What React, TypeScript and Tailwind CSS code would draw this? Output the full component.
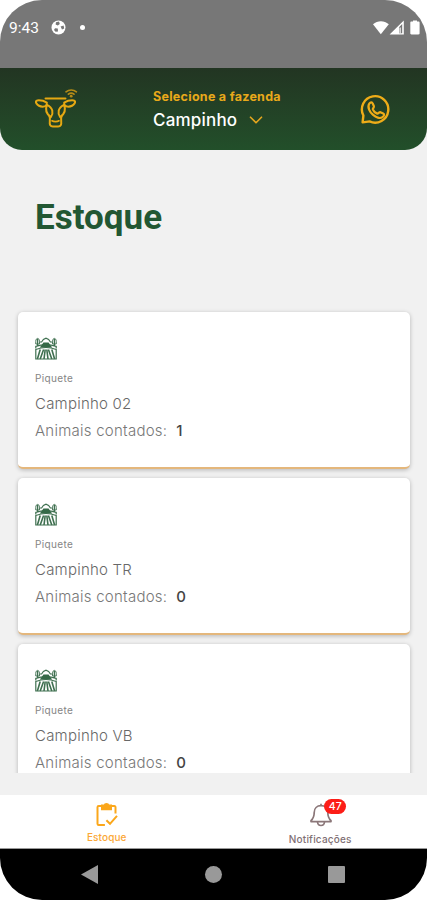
import { ChevronDown } from 'lucide-react';

type Paddock = {
  name: string;
  animals: number;
};

const paddocks: Paddock[] = [
  { name: 'Campinho 02', animals: 1 },
  { name: 'Campinho TR', animals: 0 },
  { name: 'Campinho VB', animals: 0 },
];

function BallIcon() {
  return (
    <svg width="15" height="15" viewBox="0 0 15 15">
      <circle cx="7.5" cy="7.5" r="7" fill="#fff" />
      <path d="M5 2.2 8 1.6 8.8 4 6.8 5.4 4.6 4.4ZM9.6 6.6 12.6 5.6 13.2 8.4 11 9.4ZM4 8.2 6.8 8.6 7 11.4 4.6 11.8 3 10Z" fill="#777" />
    </svg>
  );
}

function StatusIcons() {
  return (
    <svg width="50" height="16" viewBox="0 0 50 16" fill="#fff">
      <path d="M1 4.3C5.4.3 12-.1 16.8 4.3L8.8 14.3Z" />
      <path d="M17.6 14.4 31.8.4v14ZM27 7.2v6h3.2V4Z" fillRule="evenodd" />
      <path d="M27.5 7.4h1.2v5.8h-1.2z" />
      <path d="M41 1.5V.4h4v1.1h1.4c.8 0 1.2.5 1.2 1.2v10.5c0 .8-.4 1.2-1.2 1.2h-6.9c-.8 0-1.2-.4-1.2-1.2V2.7c0-.7.4-1.2 1.2-1.2Z" />
    </svg>
  );
}

function CowIcon() {
  return (
    <svg width="44" height="42" viewBox="0 0 44 42" fill="none" stroke="#e5a812" strokeWidth="2" strokeLinecap="round" strokeLinejoin="round">
      <path d="M11.5 10.4h20" />
      <path d="M12.8 14.6C10 12.8 6 12.2 3.4 12.4c-1.6.2-1.9 1.6-1 3C4 18 6.6 18.8 9.6 18.6c2.2-.2 3.4-1.8 3.2-4Z" />
      <path d="M30.2 14.6c2.8-1.8 6.8-2.4 9.4-2.2 1.6.2 1.9 1.6 1 3-1.6 2.6-4.2 3.4-7.2 3.2-2.2-.2-3.4-1.8-3.2-4Z" />
      <path d="M13 16.8c-2 4.4-1 8.6 3.8 12.4C19.8 25 19 19.6 13 16.8Z" />
      <path d="M30 16.8c2 4.4 1 8.6-3.8 12.4C23.2 25 24 19.6 30 16.8Z" />
      <path d="M15.2 27.6c1 2 1 3.6.6 6-.4 3.2.6 5 3 5h5.4c2.4 0 3.4-1.8 3-5-.4-2.4-.4-4 .6-6" />
      <path d="M18 32.8c1.6 1.2 5.4 1.2 7 0" strokeWidth="1.7" />
      <path d="M32 3.8c3-2.4 7.4-2.4 10.4 0M34.4 6.2c1.6-1.3 4-1.3 5.6 0" strokeWidth="1.7" stroke="#b58b17" />
      <circle cx="37.2" cy="8.2" r="1.4" fill="#b58b17" stroke="none" />
    </svg>
  );
}

function WhatsappIcon() {
  return (
    <svg width="32" height="32" viewBox="0 0 32 32" fill="none" stroke="#eeac18" strokeLinejoin="round">
      <path d="M2.6 28.4 3.4 21.5A13.2 13.2 0 1 1 9.6 27.4Z" strokeWidth="2.4" />
      <path d="M9.2 9.8c1.3-1.6 2.8-1.9 3.6-.2l1.1 2.6c.5 1.2-1.4 2.2-1.1 3.2.8 2.1 2.4 3.5 4.4 4.2 1 .4 2.1-1.9 3.2-1.4l2.8 1.3c1.7.9.8 2.5-.8 3.7-2.4 1.7-6.5.1-9.3-2.3-3.4-2.9-6-7.6-3.9-11.1Z" strokeWidth="2.2" />
    </svg>
  );
}

function FieldIcon() {
  return (
    <svg width="22" height="23" viewBox="0 0 22 23" fill="none" stroke="#3f7050" strokeWidth="1.2">
      <path d="M.8 22V12.5Q11 8.5 21.2 12.5V22Z" />
      <path d="M8.6 12.5 5.2 22M10.2 12.5 9 22M11.8 12.5 13 22M13.4 12.5 16.8 22M5.2 12.5 2.4 22M16.8 12.5 19.6 22" strokeWidth="1.6" />
      <path d="M.8 11.5V9.4Q11 6 21.2 9.4v2.1M2.6 9V2M19.4 9V2M4.4 5h2.2L8.4 2.5 11 1.2l2.6 1.3L15.4 5h2.2" />
      <path d="M4.8 10.4 7.4 7l1-1.6h5.2l1 1.6 2.6 3.4Z" fill="#356947" stroke="none" />
      <path d="M.8 4.4c0-4 3.6-4 3.6 0V7H.8ZM17.6 4.4c0-4 3.6-4 3.6 0V7h-3.6Z" strokeWidth="1" />
    </svg>
  );
}

function ClipboardIcon() {
  return (
    <svg width="24" height="24" viewBox="0 0 24 24" fill="none" stroke="#fba71b" strokeWidth="2">
      <path d="M20.5 10.5V4.3c0-.8-.4-1.3-1.2-1.3H3.7c-.8 0-1.2.5-1.2 1.3v16.4c0 .8.4 1.3 1.2 1.3h6.2" />
      <path d="M11.4 17.2 15 20.8l7-8" />
      <path d="M7 2.5h2.5C10 .6 13 .6 13.5 2.5H16v3.8H7Z" fill="#fba71b" />
    </svg>
  );
}

function BellIcon() {
  return (
    <svg width="22" height="24" viewBox="0 0 22 24" fill="none" stroke="#8b7779" strokeWidth="1.7" strokeLinejoin="round">
      <path d="M11 .8v2M4.2 9.5C4.2 5.2 7 2.7 11 2.7s6.8 2.5 6.8 6.8c0 4.3.8 5.9 3.2 8.2v.9H1v-.9c2.4-2.3 3.2-3.9 3.2-8.2Z" />
      <path d="M7.5 19c.2 2.2 1.5 3.5 3.5 3.5s3.3-1.3 3.5-3.5" />
    </svg>
  );
}

function PaddockCard({ name, animals }: Paddock) {
  return (
    <div className="h-[157px] shrink-0 rounded-[5px] border-b-2 border-[#e4b77c] bg-white pl-[17px] pt-[25px] shadow-[0_1px_4px_rgba(0,0,0,0.25)]">
      <FieldIcon />
      <p className="mt-[11px] h-3.5 text-[10px] leading-[14px] tracking-[0.35px] text-[#858585]">Piquete</p>
      <p className="mt-[7px] h-6 text-[15px] font-light leading-6 tracking-[0.22px] text-[#686868]">{name}</p>
      <p className="mt-[3px] h-6 text-[15px] font-light leading-6 tracking-[0.25px] text-[#777]">
        Animais contados:
        <span className="ml-[9px] font-medium text-[#444]">{animals}</span>
      </p>
    </div>
  );
}

export default function App() {
  return (
    <div className="h-[900px] w-[427px] bg-white font-['Inter',sans-serif]">
      <div className="flex h-full flex-col overflow-hidden rounded-[42px] bg-[#f1f1f1]">
        {/* Status bar */}
        <div className="flex h-[68px] shrink-0 items-start bg-[#777] pl-[9px] pt-5 text-white">
          <span className="w-[42px] font-['Roboto',sans-serif] text-[15.5px] leading-4">9:43</span>
          <BallIcon />
          <span className="ml-[14px] mt-[5px] h-[5px] w-[5px] rounded-full bg-white" />
          <span className="ml-auto mr-[5px]">
            <StatusIcons />
          </span>
        </div>

        {/* Header */}
        <header className="flex h-[82px] shrink-0 rounded-b-[22px] bg-gradient-to-b from-[#223522] to-[#224f2a]">
          <div className="ml-[34px] mt-5 w-[119px]">
            <CowIcon />
          </div>
          <div className="mt-[21px]">
            <p className="h-4 whitespace-nowrap text-[12.5px] font-bold leading-4 tracking-[0.28px] text-[#e9a91a]">
              Selecione a fazenda
            </p>
            <button className="mt-[3px] flex h-6 items-center text-[17px] font-medium leading-6 tracking-[0.2px] text-white">
              Campinho
              <ChevronDown className="ml-2 h-[22px] w-[22px] text-[#e3a51e]" strokeWidth={1.8} />
            </button>
          </div>
          <div className="ml-auto mr-[35px] mt-[26px]">
            <WhatsappIcon />
          </div>
        </header>

        <h1 className="mt-12 h-10 shrink-0 pl-[35px] font-['Roboto',sans-serif] text-[35px] font-bold leading-10 text-[#225733]">
          Estoque
        </h1>

        {/* List */}
        <main className="mt-[68px] flex h-[467px] shrink-0 flex-col gap-[9px] overflow-hidden pl-[18px] pr-[17px] pt-1.5">
          {paddocks.map((paddock) => (
            <PaddockCard key={paddock.name} {...paddock} />
          ))}
        </main>

        {/* Tabs */}
        <nav className="mt-auto flex h-[54px] shrink-0 border-b border-[#999] bg-white">
          <div className="flex w-1/2 flex-col items-center pt-2">
            <ClipboardIcon />
            <span className="mt-1 text-[10px] font-medium leading-3 tracking-[0.1px] text-[#fba735]">Estoque</span>
          </div>
          <div className="flex w-1/2 flex-col items-center pt-2">
            <div className="relative left-[1px]">
              <BellIcon />
              <span className="absolute -top-[4px] left-[14px] flex h-[15px] w-[22px] items-center justify-center rounded-full bg-[#fc1d17] text-[10.5px] font-medium text-white">
                47
              </span>
            </div>
            <span className="mt-[6px] text-[10px] font-medium leading-3 tracking-[0.2px] text-[#806f73]">Notificações</span>
          </div>
        </nav>

        {/* Android navigation */}
        <div className="flex h-[51px] shrink-0 items-center justify-between bg-black pl-[81px] pr-[82px]">
          <svg width="17" height="19" viewBox="0 0 17 19">
            <path d="M0 9.5 17 0v19Z" fill="#999" />
          </svg>
          <span className="h-[17px] w-[17px] rounded-full bg-[#999]" />
          <span className="h-[17px] w-[17px] rounded-[1px] bg-[#999]" />
        </div>
      </div>
    </div>
  );
}
